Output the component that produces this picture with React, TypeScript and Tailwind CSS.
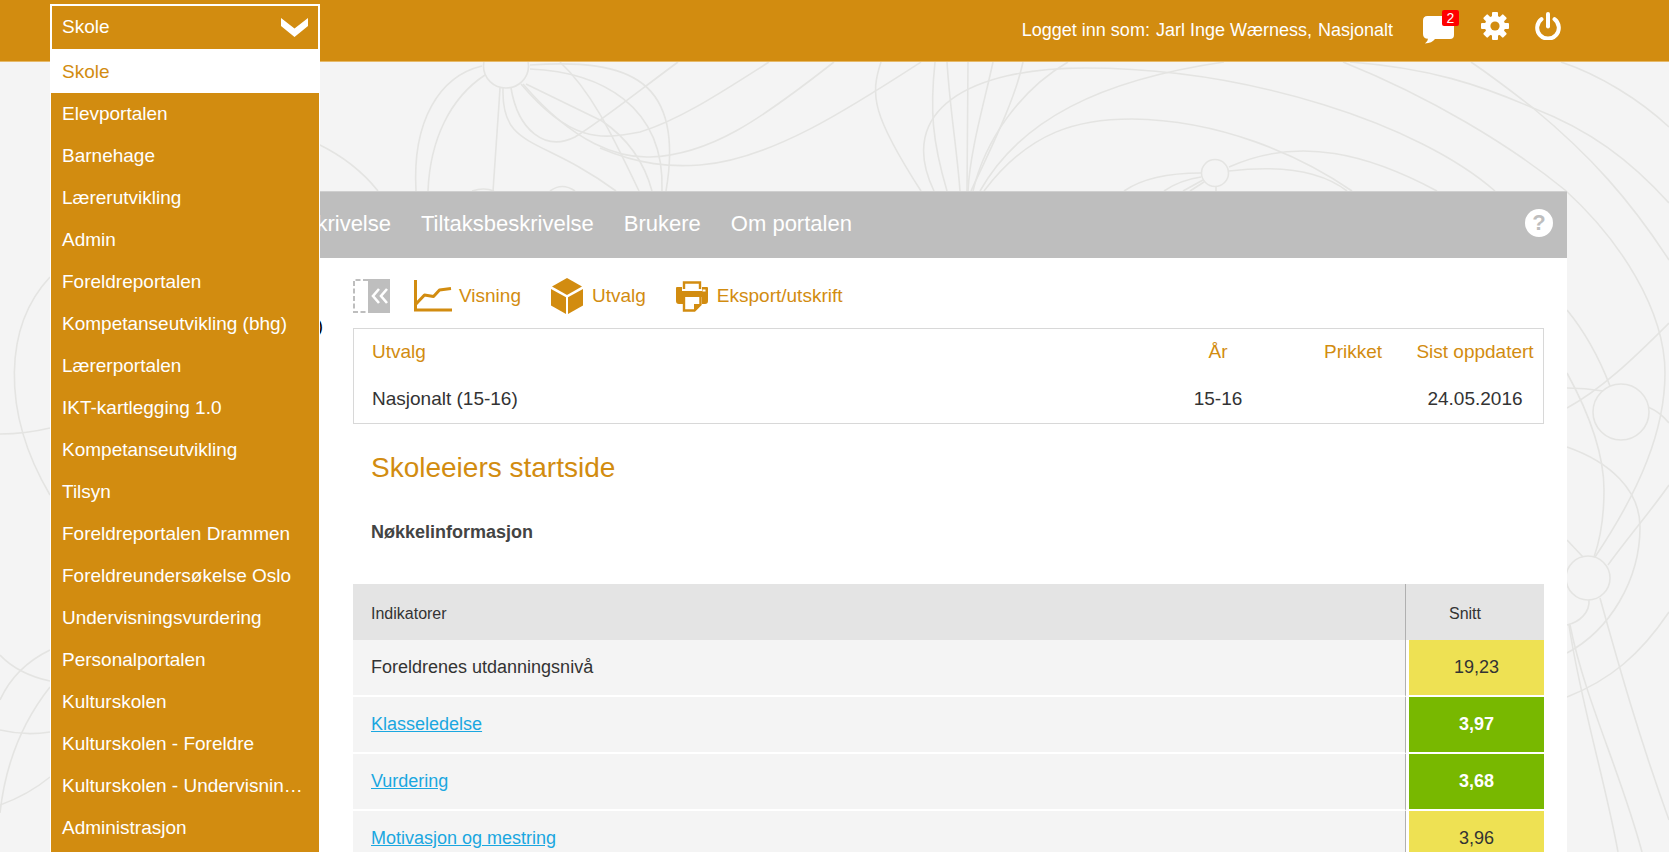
import { useState } from "react"

const portals = [
  "Skole",
  "Elevportalen",
  "Barnehage",
  "Lærerutvikling",
  "Admin",
  "Foreldreportalen",
  "Kompetanseutvikling (bhg)",
  "Lærerportalen",
  "IKT-kartlegging 1.0",
  "Kompetanseutvikling",
  "Tilsyn",
  "Foreldreportalen Drammen",
  "Foreldreundersøkelse Oslo",
  "Undervisningsvurdering",
  "Personalportalen",
  "Kulturskolen",
  "Kulturskolen - Foreldre",
  "Kulturskolen - Undervisningsvurdering",
  "Administrasjon",
]

const indicators = [
  { name: "Foreldrenes utdanningsnivå", value: "19,23", link: false, good: false },
  { name: "Klasseledelse", value: "3,97", link: true, good: true },
  { name: "Vurdering", value: "3,68", link: true, good: true },
  { name: "Motivasjon og mestring", value: "3,96", link: true, good: false },
]

const lines = [
  "M482 66C440 76 412 120 416 191",
  "M485 75C450 98 430 140 428 191",
  "M500 88C498 120 496 150 493 191",
  "M503 88C501 150 540 135 616 191",
  "M511 88C518 130 545 152 575 137C600 122 640 90 678 62",
  "M521 84C570 142 600 140 640 132C680 120 725 90 769 62",
  "M523 84C575 145 620 158 650 157C710 155 760 120 834 62",
  "M600 148C640 165 670 167 700 165C770 160 850 108 921 62",
  "M526 84L602 121C630 140 645 165 652 191",
  "M560 62C590 90 610 130 639 191",
  "M530 65C630 58 685 80 666 191",
  "M530 69C600 72 665 105 662 191",
  "M318 144Q355 162 378 191",
  "M550 191Q562 182 575 191M472 191Q484 187 494 191",
  "M881 62C870 95 872 115 921 191",
  "M934 191C895 110 970 68 1085 68C1250 68 1420 125 1495 191",
  "M935 62C930 110 932 140 947 191",
  "M947 62C950 110 957 150 960 191",
  "M968 62L967 191",
  "M993 62C985 100 970 150 968 191",
  "M1023 62C1015 100 990 150 971 191",
  "M1068 62C1020 90 985 140 973 191",
  "M1224 62C1100 80 1020 120 980 191",
  "M984 191C1030 130 1080 119 1132 119C1220 120 1300 155 1352 191",
  "M1229 167C1300 135 1370 155 1437 191",
  "M1229 171C1280 165 1320 170 1347 191",
  "M1201 173Q1150 173 1124 191M1201 177Q1180 180 1164 191M1203 180L1183 191M1204 182L1190 191M1216 187V191",
  "M1343 62C1430 97 1510 145 1565 190C1620 240 1665 310 1665 373C1665 430 1640 490 1595 557",
  "M1350 62C1430 68 1480 85 1533 108C1590 130 1630 160 1669 203",
  "M1471 62C1490 75 1510 90 1533 108C1590 155 1630 200 1669 260",
  "M1561 62C1600 75 1640 100 1669 127",
  "M1567 310C1585 332 1600 360 1610 386",
  "M1669 323C1630 362 1600 390 1567 408",
  "M1567 388Q1585 388 1603 391",
  "M1648 407Q1660 412 1669 423",
  "M1567 373C1590 415 1604 455 1604 490C1604 515 1600 540 1594 557",
  "M1567 447C1610 462 1640 490 1640 527C1640 580 1610 630 1567 653",
  "M1608 565C1630 535 1650 512 1669 485",
  "M1567 540L1583 557",
  "M1589 600C1590 612 1580 622 1567 625",
  "M1600 598C1620 670 1640 740 1669 820",
  "M1570 625C1585 700 1620 770 1642 852",
  "M1569 625C1580 700 1605 780 1618 852",
  "M1567 697C1610 680 1640 655 1669 612",
  "M50 277C5 325 0 410 50 495",
  "M0 434Q25 434 50 428",
  "M0 655Q18 674 50 681",
  "M50 650Q15 667 0 700",
  "M0 730Q25 736 50 732",
  "M50 687Q8 740 0 813",
  "M0 805Q28 795 50 777",
]

function Backdrop() {
  return (
    <svg className="absolute top-0 left-0 w-full" viewBox="0 0 1669 852" fill="none" stroke="#e4e4e2" strokeWidth="1.6" aria-hidden="true">
      {lines.map((d) => (
        <path key={d} d={d} />
      ))}
      <ellipse cx="506" cy="66" rx="22.500" ry="22" />
      <ellipse cx="1215" cy="173" rx="13.500" ry="13.500" />
      <circle cx="1621" cy="412" r="28" />
      <circle cx="1588" cy="578" r="22" />
    </svg>
  )
}

function MessageIcon() {
  return (
    <svg className="h-7 w-8" viewBox="0 0 32 28" fill="#fff" aria-hidden="true">
      <path d="M4.500 0H27Q31 0 31 4V19Q31 23 27 23H12Q9 27 2 27.500Q5 25 5 22.800Q0 22.500 0 18V4.500Q0 0 4.500 0Z" />
    </svg>
  )
}

function GearIcon() {
  return (
    <svg className="h-7 w-7" viewBox="0 0 28 28" aria-hidden="true">
      <g fill="#fff">
        {[0, 45, 90, 135].map((angle) => (
          <rect key={angle} x="11" y="0" width="6" height="28" rx="1" transform={`rotate(${angle} 14 14)`} />
        ))}
        <circle cx="14" cy="14" r="10.200" />
      </g>
      <circle cx="14" cy="14" r="4.600" fill="#d28c10" />
    </svg>
  )
}

function PowerIcon() {
  return (
    <svg className="h-7 w-[26px]" viewBox="0 0 26 28" fill="none" stroke="#fff" strokeWidth="4" strokeLinecap="round" aria-hidden="true">
      <path d="M13 2V14.500" />
      <path d="M6.500 7.200A10.800 10.800 0 1 0 19.500 7.200" />
    </svg>
  )
}

function CollapseIcon() {
  return (
    <svg className="h-[34px] w-[37px]" viewBox="0 0 37 34" fill="none" aria-hidden="true">
      <path d="M15 1H1V33H15" stroke="#bebebe" strokeWidth="2" strokeDasharray="5 2.500" />
      <rect x="15" width="22" height="34" fill="#bebebe" />
      <path d="M26 10L20 17L26 24M34 10L28 17L34 24" stroke="#fff" strokeWidth="2.600" />
    </svg>
  )
}

function ChartIcon() {
  return (
    <svg className="h-8 w-[38px]" viewBox="0 0 38 32" fill="none" stroke="#d28c10" strokeWidth="3" aria-hidden="true">
      <path d="M1.500 0V30H38" />
      <path d="M2 24L10.500 15L19.500 16.500L25.500 10L37 8.500" strokeLinejoin="round" />
    </svg>
  )
}

function CubeIcon() {
  return (
    <svg className="h-9 w-8" viewBox="0 0 32 36" fill="#d28c10" aria-hidden="true">
      <path d="M16 0L31 8.500L16 17L1 8.500Z" />
      <path d="M0 11L15 19.300V36L0 27.500Z" />
      <path d="M32 11L17 19.300V36L32 27.500Z" />
    </svg>
  )
}

function PrinterIcon() {
  return (
    <svg className="h-[31px] w-8" viewBox="0 0 32 31" aria-hidden="true">
      <path d="M8 8V1.500H24V8" fill="none" stroke="#d28c10" strokeWidth="2.400" />
      <path d="M1 6H6V10H26V6H31Q32 6 32 7V20Q32 23 29 23H3Q0 23 0 20V7Q0 6 1 6Z" fill="#d28c10" />
      <rect x="26.500" y="8.500" width="3" height="2" fill="#fff" />
      <path d="M7 16V29.500H19L26 23V16Z" fill="#fff" />
      <path d="M8 15.500V29.500H18.500L24.500 23.500V15.500" fill="none" stroke="#d28c10" strokeWidth="2.400" />
      <path d="M18 30V23H25Z" fill="#d28c10" />
    </svg>
  )
}

function PortalSelect() {
  const [portal, setPortal] = useState("Skole")

  return (
    <div className="relative z-10 mt-1 w-[270px] self-start text-[19px]">
      <select
        aria-label="Velg portal"
        value={portal}
        onChange={(e) => setPortal(e.target.value)}
        className="block h-[47px] w-full appearance-none border-2 border-white bg-[#d28c10] px-2.5 text-white outline-none"
      >
        {portals.map((name) => (
          <option key={name}>{name}</option>
        ))}
      </select>
      <svg className="pointer-events-none absolute top-3.5 right-3 h-[19px] w-[27px]" viewBox="0 0 27 19" fill="#fff" aria-hidden="true">
        <path d="M0 0L13.500 10.500L27 0V8L13.500 19L0 8Z" />
      </svg>
      <ul className="absolute top-full left-0 w-full border-x border-white bg-[#d28c10] pb-10">
        {portals.map((name) => (
          <li key={name}>
            <button
              type="button"
              onClick={() => setPortal(name)}
              className={
                name === portal
                  ? "block h-[42px] w-full truncate bg-white pr-3.5 pl-[11px] text-left text-[#d28c10]"
                  : "block h-[42px] w-full truncate pr-3.5 pl-[11px] text-left text-white"
              }
            >
              {name}
            </button>
          </li>
        ))}
      </ul>
    </div>
  )
}

export default function App() {
  return (
    <div className="relative h-screen overflow-hidden bg-[#f4f4f4] font-['Liberation_Sans',Arial,sans-serif] text-[#333]">
      <Backdrop />

      {/* Top bar */}
      <header className="relative z-10 flex h-[62px] justify-between border-b border-[#e6b968] bg-[#d28c10] pr-[108px] pl-[50px] text-white">
        <PortalSelect />
        <div className="flex items-start">
          <p className="mt-4 mr-[30px] flex gap-1.5 text-[18px] leading-7">
            <span>Logget inn som:</span>
            <span>Jarl Inge Wærness,</span>
            <span>Nasjonalt</span>
          </p>
          <div className="mt-3 flex gap-[26px]">
            <button type="button" aria-label="Meldinger" className="relative mt-1">
              <MessageIcon />
              <span className="absolute -top-1.5 -right-1 h-4 w-[17px] rounded-xs bg-[#f00] text-center text-[14px] leading-4">2</span>
            </button>
            <button type="button" aria-label="Innstillinger" className="self-start">
              <GearIcon />
            </button>
            <button type="button" aria-label="Logg ut" className="self-start">
              <PowerIcon />
            </button>
          </div>
        </div>
      </header>

      <div className="relative mt-[129px] mr-[102px] ml-[50px] bg-white">
        {/* Navigation */}
        <nav className="flex h-[67px] items-center gap-[30px] border-t border-[#cfcfcf] bg-[#bebebe] pr-3.5 pb-1 text-[22px] text-white">
          <a href="#" className="w-[341px] text-right">Indikatorbeskrivelse</a>
          <a href="#">Tiltaksbeskrivelse</a>
          <a href="#">Brukere</a>
          <a href="#">Om portalen</a>
          <button type="button" aria-label="Hjelp" className="ml-auto h-7 w-7 rounded-full bg-white text-[22px] leading-7 font-bold text-[#bebebe]">
            ?
          </button>
        </nav>

        <div className="flex">
          <aside className="w-[303px] pt-[54px] pr-[30px] text-right text-[19px] leading-7 text-black">Nasjonalt (15-16)</aside>

          <main className="flex-1 pr-[23px] pb-10">
            {/* Toolbar */}
            <div className="flex h-[70px] items-center pt-1.5 text-[19px] text-[#d28c10]">
              <button type="button" aria-label="Skjul meny" className="mr-6">
                <CollapseIcon />
              </button>
              <button type="button" className="mr-[30px] flex items-center gap-[7px]">
                <ChartIcon />
                Visning
              </button>
              <button type="button" className="mr-[30px] flex items-center gap-[9px]">
                <CubeIcon />
                Utvalg
              </button>
              <button type="button" className="flex items-center gap-[9px]">
                <PrinterIcon />
                Eksport/utskrift
              </button>
            </div>

            {/* Selection summary */}
            <div className="border border-[#d8d8d8]">
              <table className="w-full table-fixed text-[19px]">
                <colgroup>
                  <col />
                  <col className="w-[162px]" />
                  <col className="w-[108px]" />
                  <col className="w-[136px]" />
                </colgroup>
                <thead className="text-[#d28c10]">
                  <tr className="h-[47px]">
                    <th className="pl-[18px] text-left font-normal">Utvalg</th>
                    <th className="font-normal">År</th>
                    <th className="font-normal">Prikket</th>
                    <th className="font-normal">Sist oppdatert</th>
                  </tr>
                </thead>
                <tbody>
                  <tr className="h-[47px] text-center">
                    <td className="pl-[18px] text-left">Nasjonalt (15-16)</td>
                    <td>15-16</td>
                    <td></td>
                    <td>24.05.2016</td>
                  </tr>
                </tbody>
              </table>
            </div>

            <h1 className="mt-6 pl-[18px] text-[28px] leading-10 text-[#d28c10]">Skoleeiers startside</h1>
            <h2 className="mt-8 pl-[18px] text-[18px] leading-6 font-bold text-[#444]">Nøkkelinformasjon</h2>

            {/* Key indicators */}
            <table className="mt-10 w-full table-fixed border-separate border-spacing-0 text-[18px]">
              <colgroup>
                <col />
                <col className="w-[138px]" />
              </colgroup>
              <thead>
                <tr className="h-14 bg-[#e4e4e4] text-[16px]">
                  <th className="border-r border-[#b0b0b0] pt-1 pl-[18px] text-left font-normal">Indikatorer</th>
                  <th className="pt-1 pr-5 font-normal">Snitt</th>
                </tr>
              </thead>
              <tbody>
                {indicators.map((row) => (
                  <tr key={row.name} className="h-[57px]">
                    <td className="border-r border-b-2 border-r-[#b0b0b0] border-b-white bg-[#f4f4f4] pl-[18px]">
                      {row.link ? (
                        <a href="#" className="text-[#1aa7e0] underline">
                          {row.name}
                        </a>
                      ) : (
                        row.name
                      )}
                    </td>
                    <td
                      className={
                        row.good
                          ? "border-b-2 border-l-3 border-white bg-[#78b800] text-center font-bold text-white"
                          : "border-b-2 border-l-3 border-white bg-[#eee153] text-center"
                      }
                    >
                      {row.value}
                    </td>
                  </tr>
                ))}
              </tbody>
            </table>
          </main>
        </div>
      </div>
    </div>
  )
}
